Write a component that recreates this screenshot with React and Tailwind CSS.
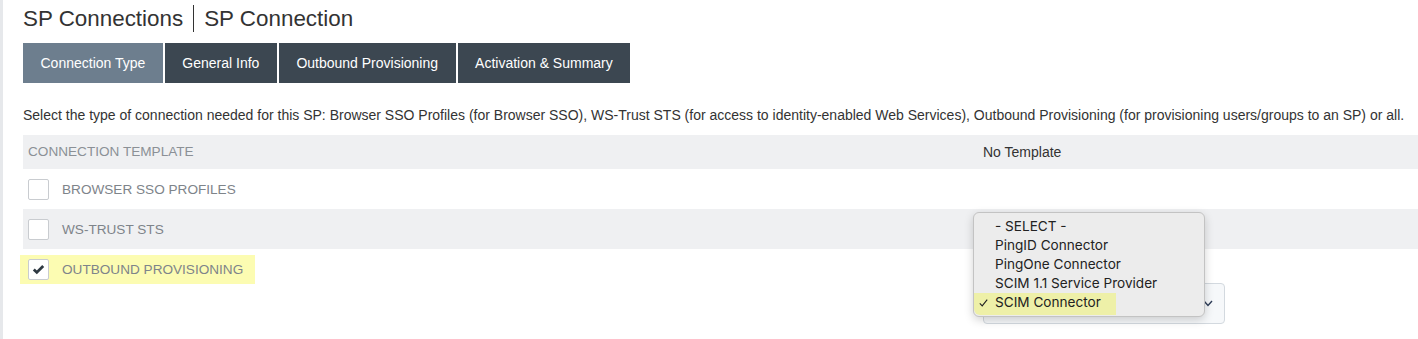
const tabs = ["Connection Type", "General Info", "Outbound Provisioning", "Activation & Summary"];

const options = [
  "- SELECT -",
  "PingID Connector",
  "PingOne Connector",
  "SCIM 1.1 Service Provider",
  "SCIM Connector",
];

function Checkbox({ checked }) {
  return (
    <div className="w-[21px] h-[21px] shrink-0 rounded-[2px] border border-[#c9ccd0] bg-white flex items-center justify-center">
      {checked && (
        <svg width="13" height="11" viewBox="0 0 13 11">
          <path d="M1.8 5.6 L4.8 8.4 L11.2 2" fill="none" stroke="#2e3942" strokeWidth="2.8" />
        </svg>
      )}
    </div>
  );
}

function OptionRow({ label, checked, shaded }) {
  return (
    <div className={`h-[40px] flex items-center pl-[5px] ${shaded ? "bg-[#eff0f2]" : "bg-white"}`}>
      <Checkbox checked={checked} />
      <span className="ml-[13px] pt-[3px] text-[13.6px] text-[#7e848a] uppercase">{label}</span>
    </div>
  );
}

export default function App() {
  return (
    <div
      className="w-[1418px] h-[339px] overflow-hidden bg-white border-l-[3px] border-[#e6e8eb] pl-[20px]"
      style={{ fontFamily: '"Liberation Sans", Arial, sans-serif' }}
    >
      {/* Title */}
      <div className="h-[36px] pt-[6px] flex items-start text-[22.4px] text-[#333] leading-[26px]">
        <span>SP Connections</span>
        <span className="mx-[10px] mt-[-1px] w-px h-[27px] bg-[#333]"></span>
        <span>SP Connection</span>
      </div>

      {/* Tabs */}
      <div className="mt-[7px] flex gap-[2px] text-[14px] text-white">
        {tabs.map((t, i) => (
          <div
            key={t}
            className={`h-[40px] flex items-center px-[17.5px] ${i === 0 ? "bg-[#6d7e8e]" : "bg-[#3c4751]"}`}
          >
            {t}
          </div>
        ))}
      </div>

      {/* Description */}
      <p className="mt-[24px] text-[14px] text-[#333] leading-[16px] whitespace-nowrap">
        Select the type of connection needed for this SP: Browser SSO Profiles (for Browser SSO), WS-Trust STS (for access to identity-enabled Web Services), Outbound Provisioning (for provisioning users/groups to an SP) or all.
      </p>

      {/* Table */}
      <div className="mt-[12px] flex">
        <div className="w-[955px] shrink-0">
          <div className="h-[34px] flex items-center pl-[5px] bg-[#eff0f2] text-[13.6px] text-[#8b9096] uppercase">
            Connection Template
          </div>
          <OptionRow label="Browser SSO Profiles" />
          <OptionRow label="WS-Trust STS" shaded />
          <div className="h-[40px] flex items-center">
            <div className="ml-[-3px] pl-[8px] pr-[12px] h-[29px] flex items-center bg-[#fcfcb2]">
              <Checkbox checked />
              <span className="ml-[13px] pt-[3px] text-[13.6px] text-[#7e848a] uppercase">Outbound Provisioning</span>
            </div>
          </div>
        </div>

        <div className="flex-1">
          <div className="h-[34px] flex items-center pl-[5px] bg-[#eff0f2] text-[14px] text-[#333]">
            No Template
          </div>
          <div className="h-[40px] bg-white"></div>
          <div className="h-[40px] bg-[#eff0f2]"></div>
          <div className="pt-[34px] pl-[5px]">
            <div className="relative w-[242px] h-[41px] rounded-[4px] border border-[#d3d9df] bg-[#f6f8fa] flex items-center justify-end pr-[11px]">
              <svg width="10" height="7" viewBox="0 0 10 7">
                <path d="M1 1 L5 5.5 L9 1" fill="none" stroke="#2e3d58" strokeWidth="1.4" />
              </svg>

              {/* Open select menu */}
              <div
                className="absolute left-[-11px] top-[-72px] w-[232px] py-[4px] rounded-[6px] border border-[#c3c3c3] bg-[#ececec] shadow-[0_3px_10px_rgba(0,0,0,0.18)] text-[13.6px] text-[#222]"
                style={{ fontFamily: 'Inter, "Noto Sans", sans-serif' }}
              >
                <div className="absolute left-0 top-[80px] w-[142px] h-[22px] bg-[#eef0a8] rounded-bl-[6px]"></div>
                {options.map((o, i) => (
                  <div key={o} className="relative h-[19px] flex items-center pl-[21px]">
                    {i === options.length - 1 && (
                      <svg className="absolute left-[5px] top-[6px]" width="9" height="8" viewBox="0 0 9 8">
                        <path d="M0.8 4.3 L3.2 6.8 L8.2 0.6" fill="none" stroke="#222" strokeWidth="1.1" />
                      </svg>
                    )}
                    {o}
                  </div>
                ))}
              </div>
            </div>
          </div>
        </div>
      </div>
    </div>
  );
}
